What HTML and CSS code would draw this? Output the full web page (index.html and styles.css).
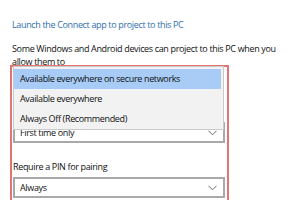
FILE: index.html
```html
<!DOCTYPE html>
<html>
<head>
<meta charset="utf-8">
<link rel="stylesheet" href="styles.css">
</head>
<body>
<div class="page">
  <a class="link">Launch the Connect app to project to this PC</a>
  <p class="desc">Some Windows and Android devices can project to this PC when you allow them to</p>
  <div class="group">
    <div class="select covered"><span>Available everywhere on secure networks</span></div>
    <div class="label covered">Ask to project to this PC</div>
    <div class="select"><span>First time only</span><svg class="chev" width="9" height="6" viewBox="0 0 9 6"><path d="M0.5 0.8 L4.5 4.8 L8.5 0.8" fill="none" stroke="#666" stroke-width="1"/></svg></div>
    <div class="label">Require a PIN for pairing</div>
    <div class="select"><span>Always</span><svg class="chev" width="9" height="6" viewBox="0 0 9 6"><path d="M0.5 0.8 L4.5 4.8 L8.5 0.8" fill="none" stroke="#666" stroke-width="1"/></svg></div>
    <ul class="popup">
      <li class="item active">Available everywhere on secure networks</li>
      <li class="item">Available everywhere</li>
      <li class="item">Always Off (Recommended)</li>
    </ul>
  </div>
</div>
</body>
</html>
```
FILE: styles.css
```css
html, body {
  margin: 0;
  padding: 0;
  background: #fff;
}
body {
  font-family: "Open Sans", "Noto Sans", sans-serif;
  font-size: 9px;
  letter-spacing: -0.35px;
  line-height: 13px;
  color: #1a1a1a;
  overflow: hidden;
  width: 300px;
  height: 200px;
}
.page {
  padding: 18px 0 0 12px;
}
.link {
  display: block;
  color: #2f6fae;
}
.desc {
  margin: 11px 0 0 0;
  width: 272px;
  color: #111;
}
.group {
  position: relative;
  margin: -3px 0 0 -2px;
  width: 212px;
  border: 2px solid #e27474;
  border-bottom: none;
  padding: 0 2px 30px 1px;
  display: flex;
  flex-direction: column;
}
.select {
  height: 17px;
  border: 2px solid #a9a9a9;
  background: #fff;
  display: flex;
  align-items: center;
  justify-content: space-between;
  padding: 0 6px 0 5px;
  color: #111;
}
.covered {
  visibility: hidden;
}
.chev {
  display: block;
}
.label {
  margin: 17px 0 4px 0;
  color: #111;
}
.popup {
  position: absolute;
  top: -1px;
  left: 1px;
  width: 207px;
  margin: 0;
  list-style: none;
  background: #f2f2f2;
  border: 1px solid #cacaca;
  padding: 2px 2px 0 0;
}
.item {
  height: 20px;
  line-height: 20px;
  padding-left: 6px;
  color: #111;
}
.item.active {
  background: #a8ccf6;
}
```
